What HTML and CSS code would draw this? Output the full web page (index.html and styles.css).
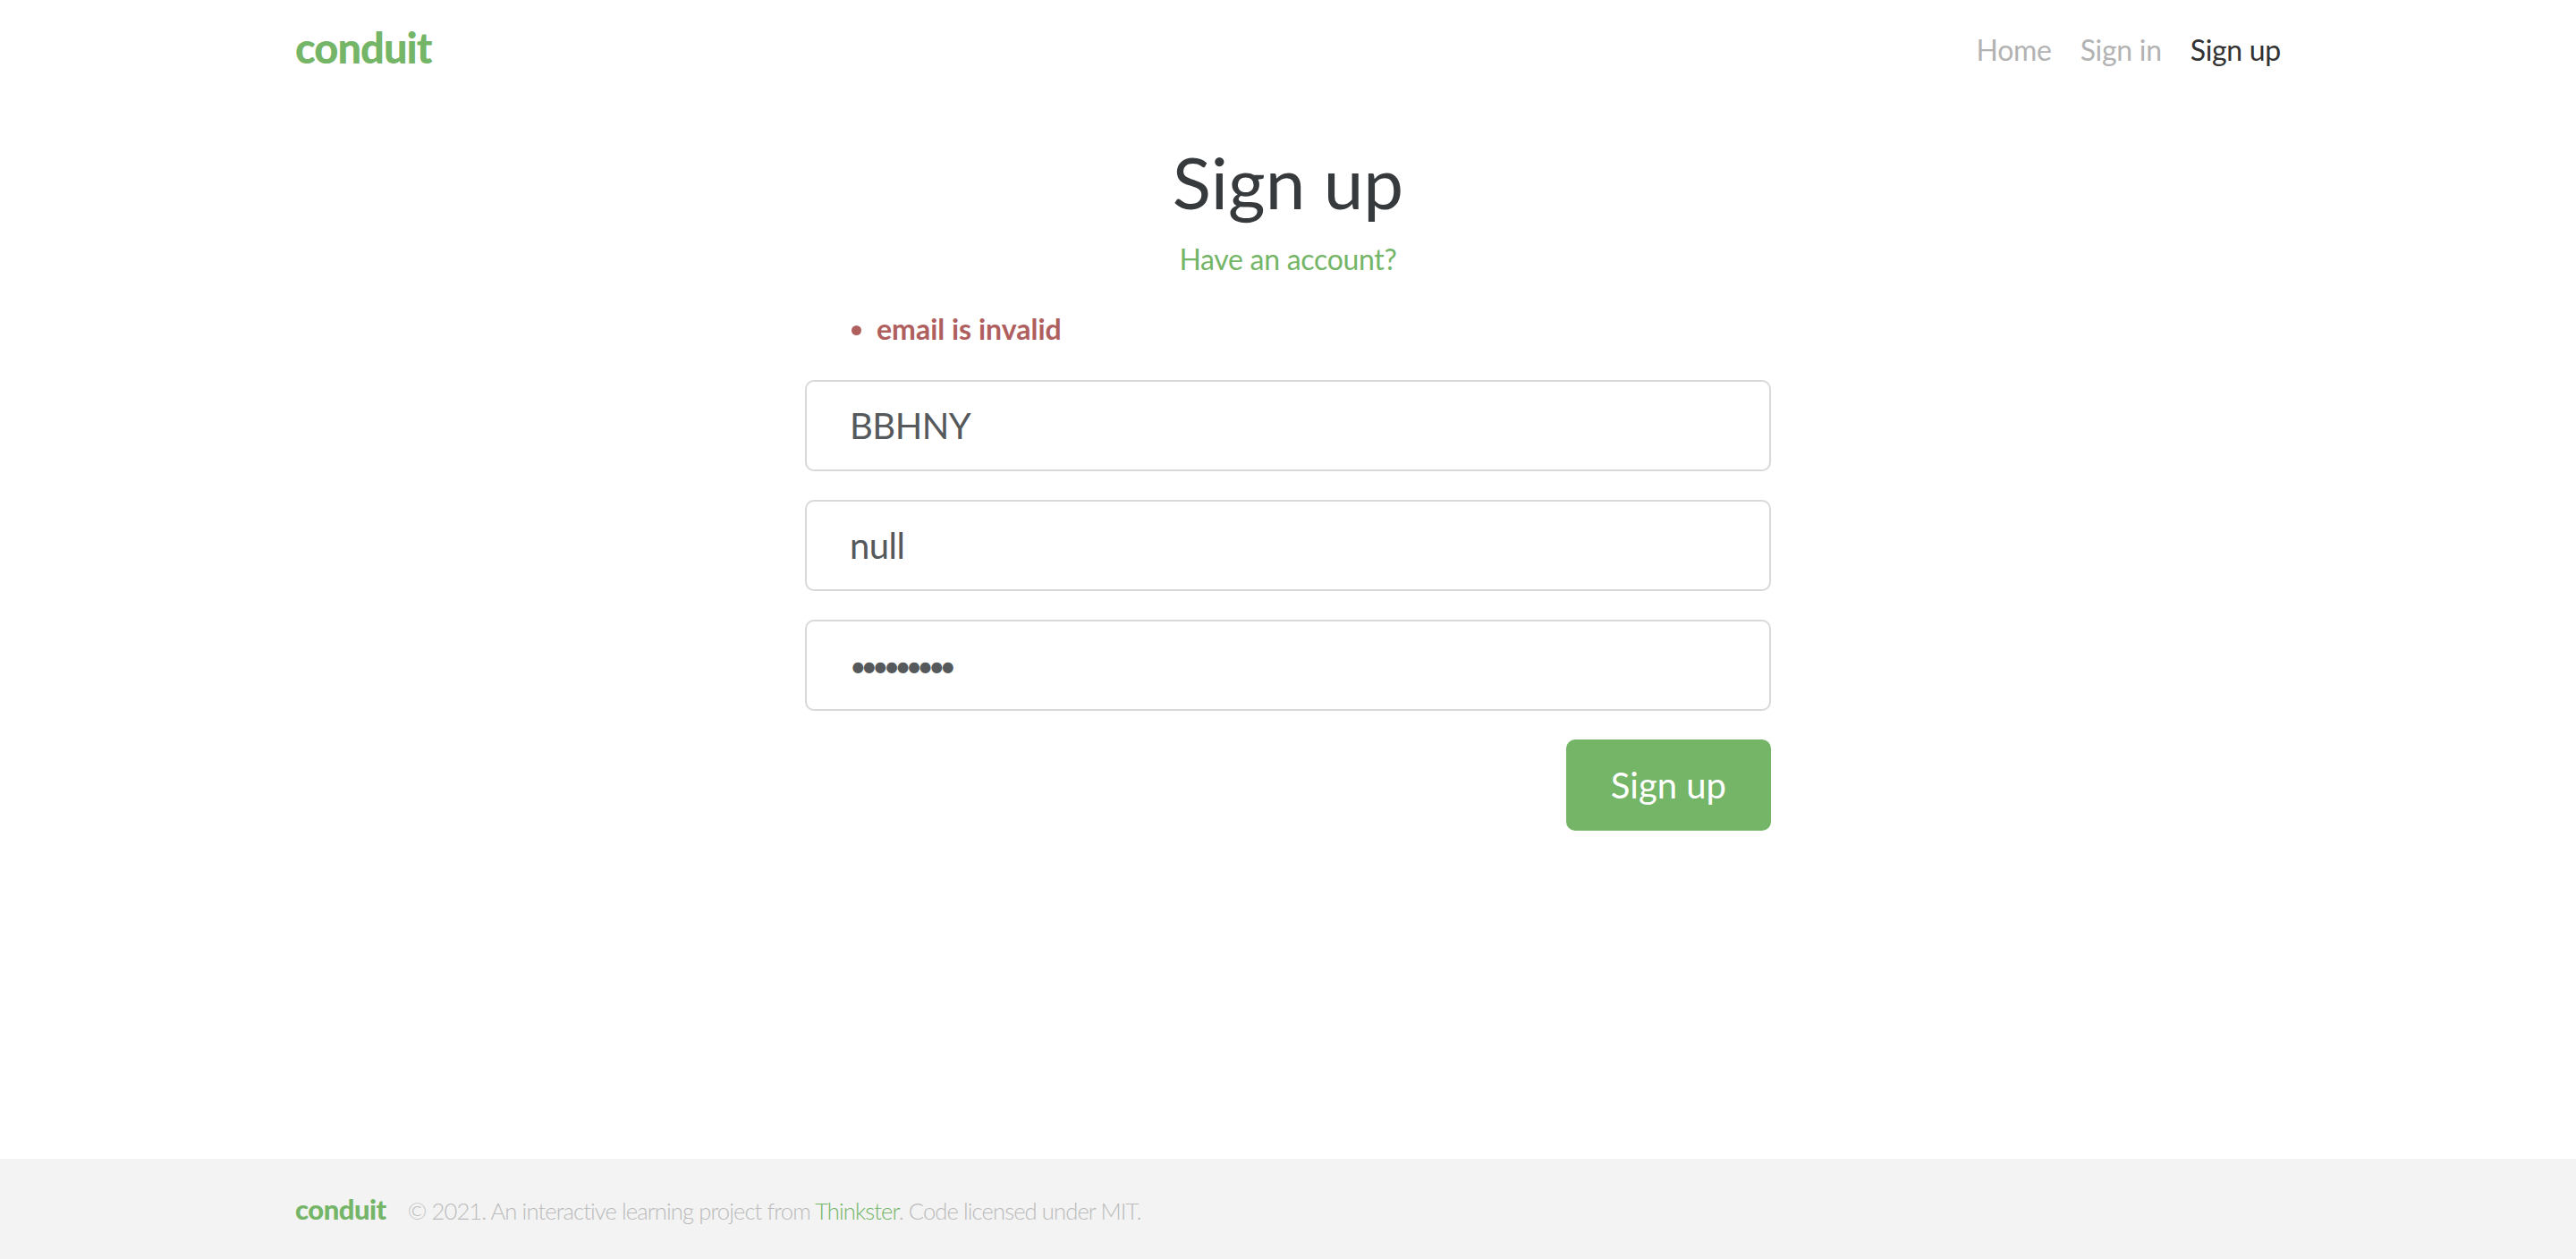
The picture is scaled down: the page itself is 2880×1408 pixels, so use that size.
FILE: index.html
```html
<!DOCTYPE html>
<html lang="en">
<head>
<meta charset="utf-8">
<title>Sign up — Conduit</title>
<link rel="stylesheet" href="styles.css">
</head>
<body>
<div class="page">
  <nav class="navbar">
    <div class="container nav-inner">
      <a class="brand logo-font" href="#">conduit</a>
      <ul class="nav-links">
        <li><a class="nav-link" href="#">Home</a></li>
        <li><a class="nav-link" href="#">Sign in</a></li>
        <li><a class="nav-link active" href="#">Sign up</a></li>
      </ul>
    </div>
  </nav>

  <main class="auth-page">
    <div class="container">
      <div class="auth-col">
        <h1 class="auth-title">Sign up</h1>
        <p class="auth-sub"><a href="#">Have an account?</a></p>
        <ul class="error-messages">
          <li>email is invalid</li>
        </ul>
        <form class="auth-form">
          <div class="form-group"><input class="form-control" type="text" value="BBHNY" placeholder="Your Name"></div>
          <div class="form-group"><input class="form-control" type="text" value="null" placeholder="Email"></div>
          <div class="form-group"><input class="form-control password" type="password" value="123456789" placeholder="Password"></div>
          <div class="form-actions"><button class="btn-primary" type="button">Sign up</button></div>
        </form>
      </div>
    </div>
  </main>

  <footer class="footer">
    <div class="container footer-inner">
      <a class="footer-logo logo-font" href="#">conduit</a>
      <span class="attribution">© 2021. An interactive learning project from <a href="#">Thinkster</a>. Code licensed under MIT.</span>
    </div>
  </footer>
</div>
</body>
</html>
```

FILE: styles.css
```css
* { box-sizing: border-box; }

html, body {
  margin: 0;
  padding: 0;
  background: #fff;
}

body {
  font-family: "Lato", "Liberation Sans", sans-serif;
  color: #373a3c;
}

a { text-decoration: none; }

.page {
  min-height: 1408px;
  display: flex;
  flex-direction: column;
}

.container {
  width: 2280px;
  margin: 0 auto;
  padding: 0 30px;
}

/* navbar */
.navbar { height: 112px; }

.nav-inner {
  display: flex;
  justify-content: space-between;
  align-items: flex-start;
}

.logo-font {
  font-family: "Lato", "Liberation Sans", sans-serif;
  font-weight: 900;
  color: #74b568;
  line-height: 1;
}

.brand {
  font-size: 47px;
  letter-spacing: -1px;
  margin-top: 30px;
}

.nav-links {
  list-style: none;
  margin: 40px 0 0;
  padding: 0;
  display: flex;
  gap: 32px;
}

.nav-link {
  font-size: 32px;
  line-height: 1;
  letter-spacing: -0.3px;
  color: #b3b3b3;
}

.nav-link.active { color: #333; }

/* auth */
.auth-col {
  width: 1080px;
  margin: 0 auto;
}

.auth-title {
  margin: 51px 0 0;
  font-size: 80px;
  font-weight: 400;
  line-height: 1;
  text-align: center;
  color: #373a3c;
}

.auth-sub {
  margin: 31px 0 0;
  font-size: 32px;
  line-height: 1;
  letter-spacing: -0.3px;
  text-align: center;
}

.auth-sub a { color: #74b568; }

.error-messages {
  margin: 46px 0 0;
  padding-left: 80px;
  font-size: 32px;
  line-height: 1;
  font-weight: 700;
  color: #b05f5f;
}

.auth-form { margin-top: 41px; }

.form-group { margin-bottom: 32px; }

.form-control {
  display: block;
  width: 100%;
  height: 102px;
  padding: 0 48px;
  font-family: "Lato", "Liberation Sans", sans-serif;
  font-size: 40px;
  letter-spacing: -0.5px;
  color: #55595c;
  background: #fff;
  border: 2px solid #d9d9d9;
  border-radius: 10px;
  outline: none;
}

.form-control.password {
  font-size: 32px;
  letter-spacing: -6px;
}

.form-actions {
  display: flex;
  justify-content: flex-end;
}

.btn-primary {
  height: 102px;
  padding: 0 48px;
  font-family: "Lato", "Liberation Sans", sans-serif;
  font-size: 40px;
  color: #fff;
  background: #74b568;
  border: 2px solid #74b568;
  border-radius: 10px;
}

/* footer */
.footer {
  margin-top: auto;
  background: #f3f3f3;
  padding: 32px 0;
  height: 112px;
}

.footer-inner {
  height: 48px;
  line-height: 48px;
  white-space: nowrap;
  overflow: hidden;
}

.footer-logo {
  font-size: 31px;
  letter-spacing: -0.5px;
  line-height: 48px;
  margin-right: 20px;
}

.attribution {
  font-size: 25.6px;
  font-weight: 300;
  letter-spacing: -0.9px;
  color: #bbb;
}

.attribution a { color: #74b568; }
```
